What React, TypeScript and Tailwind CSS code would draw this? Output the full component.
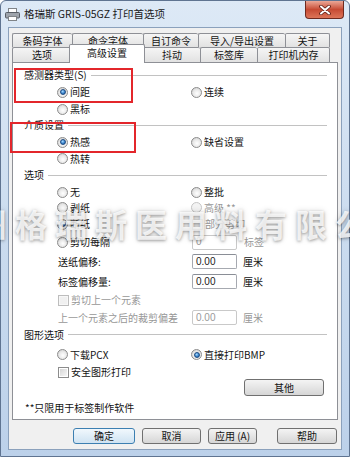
import type { ReactNode } from "react";

function PrinterIcon() {
  return (
    <svg width="15" height="13" viewBox="0 0 15 13" className="shrink-0">
      <rect x="3.5" y="0.5" width="8" height="4" fill="#fff" stroke="#808488" />
      <rect x="0.5" y="4.5" width="14" height="5.5" rx="1" fill="#9ea4ac" stroke="#585e66" />
      <rect x="3.5" y="8.5" width="8" height="4" fill="#fff" stroke="#808488" />
    </svg>
  );
}

function CloseButton() {
  return (
    <div className="absolute right-[5px] top-0 flex h-[18px] w-[39px] items-center justify-center rounded-b-[4px] border border-t-0 border-[#6e2a1f] bg-gradient-to-b from-[#eaa797] via-[#c64a33] to-[#dc7458]">
      <svg width="12" height="10" viewBox="0 0 12 10">
        <path d="M2 1.5 L10 8.5 M10 1.5 L2 8.5" stroke="#5a1d14" strokeWidth="3.6" strokeLinecap="round" />
        <path d="M2 1.5 L10 8.5 M10 1.5 L2 8.5" stroke="#ffffff" strokeWidth="2" strokeLinecap="round" />
      </svg>
    </div>
  );
}

function Radio({ checked, disabled }: { checked?: boolean; disabled?: boolean }) {
  return (
    <span
      className={`flex h-[11px] w-[11px] shrink-0 items-center justify-center rounded-full border ${
        disabled
          ? "border-[#c6c6c6] bg-[#f3f3f3]"
          : "border-[#8c8c8c] bg-[radial-gradient(circle_at_55%_60%,#ffffff_0%,#e9e9e9_50%,#c4c4c4_100%)]"
      }`}
    >
      {checked && (
        <span className="h-[6px] w-[6px] rounded-full border border-[#1d4a80] bg-[radial-gradient(circle_at_40%_35%,#a8dbff_0%,#3a86cf_55%,#1b508f_100%)]" />
      )}
    </span>
  );
}

function Check({ disabled }: { disabled?: boolean }) {
  return (
    <span
      className={`flex h-[11px] w-[11px] shrink-0 items-center justify-center border ${
        disabled ? "border-[#bdbdbd] bg-[#f7f7f7]" : "border-[#8c8c8c] bg-white"
      }`}
    >
      <span
        className={`h-[7px] w-[7px] ${
          disabled ? "bg-[#f0f0f0]" : "bg-gradient-to-br from-[#d6d6d6] to-[#f7f7f7]"
        }`}
      />
    </span>
  );
}

function Opt({
  children,
  checked,
  disabled,
  box,
}: {
  children: ReactNode;
  checked?: boolean;
  disabled?: boolean;
  box?: boolean;
}) {
  return (
    <div className="flex items-center gap-[2px]">
      {box ? <Check disabled={disabled} /> : <Radio checked={checked} disabled={disabled} />}
      <span className={disabled ? "text-[#979797]" : ""}>{children}</span>
    </div>
  );
}

function Field({ value, disabled }: { value: string; disabled?: boolean }) {
  return (
    <div
      className={`flex h-[15px] w-[45px] items-center rounded-[2px] border bg-white pl-[3px] font-['Liberation_Sans',sans-serif] text-[10px] ${
        disabled ? "border-[#c9c9c9] text-[#9a9a9a]" : "border-[#a6a9b0] border-t-[#8a8e96] text-[#222]"
      }`}
    >
      {value}
    </div>
  );
}

function Group({ label, h }: { label: string; h: string }) {
  return (
    <div className={`flex items-center pl-[11px] pr-[10px] ${h}`}>
      <span>{label}</span>
      <span className="ml-[4px] h-px flex-1 bg-[#c2c2c2]" />
    </div>
  );
}

function Row({ h, left, right }: { h: string; left?: ReactNode; right?: ReactNode }) {
  return (
    <div className={`flex items-center ${h}`}>
      <div className="w-[178px] pl-[44px]">{left}</div>
      <div className="flex items-center">{right}</div>
    </div>
  );
}

function Btn({ label, w, focus }: { label: string; w: string; focus?: boolean }) {
  return (
    <div
      className={`flex h-[16px] items-center justify-center rounded-[3px] border ${w} ${
        focus
          ? "border-[#3c7fb1] bg-gradient-to-b from-[#f1f8fd] to-[#cfe3f2]"
          : "border-[#707070] bg-gradient-to-b from-[#f4f4f4] to-[#d6d6d6]"
      }`}
    >
      {label}
    </div>
  );
}

const ROW1 = [
  { label: "条码字体", w: "w-[60px]" },
  { label: "命令字体", w: "w-[71px]" },
  { label: "自订命令", w: "w-[55px]" },
  { label: "导入/导出设置", w: "w-[87px]" },
  { label: "关于", w: "w-[45px]" },
];

export default function App() {
  return (
    <div className="relative h-[457px] w-[350px] overflow-hidden bg-white font-['Noto_Sans_CJK_SC','Noto_Sans',sans-serif] text-[10px] leading-none text-[#141414]">
      <div className="flex h-full w-full flex-col rounded-t-[6px] border border-[#5f7491] bg-gradient-to-b from-[#dde9f6] via-[#cbdcef] to-[#bcd1ea]">
        <div className="relative flex h-[26px] shrink-0 items-center pl-[4px]">
          <PrinterIcon />
          <span className="ml-[4px] text-[10.5px] text-[#1a1a1a]">格瑞斯 GRIS-05GZ 打印首选项</span>
          <CloseButton />
        </div>

        <div className="mx-[7px] mb-[6px] flex flex-1 flex-col border border-[#8ba1bc] bg-[#f0f0f0] px-[3px] pt-[5px]">
          {/* back tab row */}
          <div className="flex h-[14px]">
            {ROW1.map((t, i) => (
              <div
                key={t.label}
                className={`flex items-center justify-center rounded-t-[2px] border-l border-t border-[#8e9096] bg-gradient-to-b from-[#f5f5f5] to-[#e2e2e2] ${t.w} ${
                  i === ROW1.length - 1 ? "border-r" : ""
                }`}
              >
                {t.label}
              </div>
            ))}
          </div>
          {/* front tab row */}
          <div className="flex h-[15px] items-end">
            <div className="flex h-[15px] w-[59px] items-center justify-center rounded-t-[2px] border-l border-t border-[#8e9096] bg-gradient-to-b from-[#f5f5f5] to-[#e2e2e2]">
              选项
            </div>
            <div className="relative z-10 -mx-[2px] -mb-px flex h-[19px] w-[76px] items-center justify-center rounded-t-[2px] border-x border-t border-[#8e9096] bg-white pb-[2px]">
              高级设置
            </div>
            <div className="flex h-[15px] w-[57px] items-center justify-center rounded-t-[2px] border-l border-t border-[#8e9096] bg-gradient-to-b from-[#f5f5f5] to-[#e2e2e2]">
              抖动
            </div>
            <div className="flex h-[15px] w-[57px] items-center justify-center rounded-t-[2px] border-l border-t border-[#8e9096] bg-gradient-to-b from-[#f5f5f5] to-[#e2e2e2]">
              标签库
            </div>
            <div className="flex h-[15px] w-[73px] items-center justify-center rounded-t-[2px] border-x border-t border-[#8e9096] bg-gradient-to-b from-[#f5f5f5] to-[#e2e2e2]">
              打印机内存
            </div>
          </div>

          {/* tab page */}
          <div className="flex h-[358px] shrink-0 flex-col border border-[#8e9096] bg-white pt-[4px]">
            <Group label="感测器类型(S)" h="h-[16px]" />
            <Row h="h-[18px]" left={<Opt checked>间距</Opt>} right={<Opt>连续</Opt>} />
            <Row h="h-[16px]" left={<Opt>黑标</Opt>} />
            <Group label="介质设置" h="h-[16px]" />
            <Row h="h-[18px]" left={<Opt checked>热感</Opt>} right={<Opt>缺省设置</Opt>} />
            <Row h="h-[15px]" left={<Opt>热转</Opt>} />
            <Group label="选项" h="h-[18px]" />
            <Row h="h-[16px]" left={<Opt>无</Opt>} right={<Opt>整批</Opt>} />
            <Row h="h-[15px]" left={<Opt>剥纸</Opt>} right={<Opt disabled>高级 **</Opt>} />
            <Row
              h="h-[18px]"
              left={<Opt checked>断纸</Opt>}
              right={
                <div className="ml-[1px]">
                  <Opt box disabled>部分剪切</Opt>
                </div>
              }
            />
            <Row
              h="h-[18px]"
              left={<Opt>剪切每隔</Opt>}
              right={
                <div className="ml-[1px] flex items-center">
                  <Field value="0" disabled />
                  <span className="ml-[7px] text-[#979797]">标签</span>
                </div>
              }
            />
            <div className="flex h-[21px] items-center">
              <span className="w-[179px] pl-[45px]">送纸偏移:</span>
              <Field value="0.00" />
              <span className="ml-[6px]">厘米</span>
            </div>
            <div className="flex h-[19px] items-center">
              <span className="w-[179px] pl-[45px]">标签偏移量:</span>
              <Field value="0.00" />
              <span className="ml-[6px]">厘米</span>
            </div>
            <div className="flex h-[18px] items-center pl-[45px]">
              <Opt box disabled>剪切上一个元素</Opt>
            </div>
            <div className="flex h-[17px] items-center">
              <span className="w-[179px] pl-[45px] text-[#979797]">上一个元素之后的裁剪偏差</span>
              <Field value="0.00" disabled />
              <span className="ml-[6px] text-[#979797]">厘米</span>
            </div>
            <Group label="图形选项" h="h-[17px]" />
            <Row h="h-[23px]" left={<Opt>下载PCX</Opt>} right={<Opt checked>直接打印BMP</Opt>} />
            <div className="flex h-[12px] items-center pl-[45px]">
              <Opt box>安全图形打印</Opt>
            </div>
            <div className="flex h-[19px] items-center pl-[231px]">
              <div className="flex h-[17px] w-[80px] items-center justify-center rounded-[3px] border border-[#707070] bg-gradient-to-b from-[#f4f4f4] to-[#d6d6d6]">
                其他
              </div>
            </div>
            <div className="flex h-[22px] items-center pl-[12px]">**只限用于标签制作软件</div>
          </div>

          {/* dialog buttons */}
          <div className="flex pt-[8px]">
            <div className="ml-[61px]">
              <Btn label="确定" w="w-[62px]" focus />
            </div>
            <div className="ml-[7px]">
              <Btn label="取消" w="w-[59px]" />
            </div>
            <div className="ml-[7px]">
              <Btn label="应用 (A)" w="w-[49px]" />
            </div>
            <div className="ml-[20px]">
              <Btn label="帮助" w="w-[60px]" />
            </div>
          </div>
        </div>
      </div>

      {/* red annotation boxes */}
      <div className="absolute left-[14px] top-[68px] h-[35px] w-[119px] border-2 border-[#e3262b]" />
      <div className="absolute left-[10px] top-[122px] h-[31px] w-[126px] border-2 border-[#e3262b]" />

      {/* watermark */}
      <div className="pointer-events-none absolute left-[-25px] top-[207px] whitespace-nowrap text-[32px] font-bold leading-[32px] tracking-[8px] text-white/80 [text-shadow:0_1px_3px_rgba(0,0,0,0.35),0_0_6px_rgba(0,0,0,0.15)]">
        州格瑞斯医用料有限公司
      </div>
    </div>
  );
}
